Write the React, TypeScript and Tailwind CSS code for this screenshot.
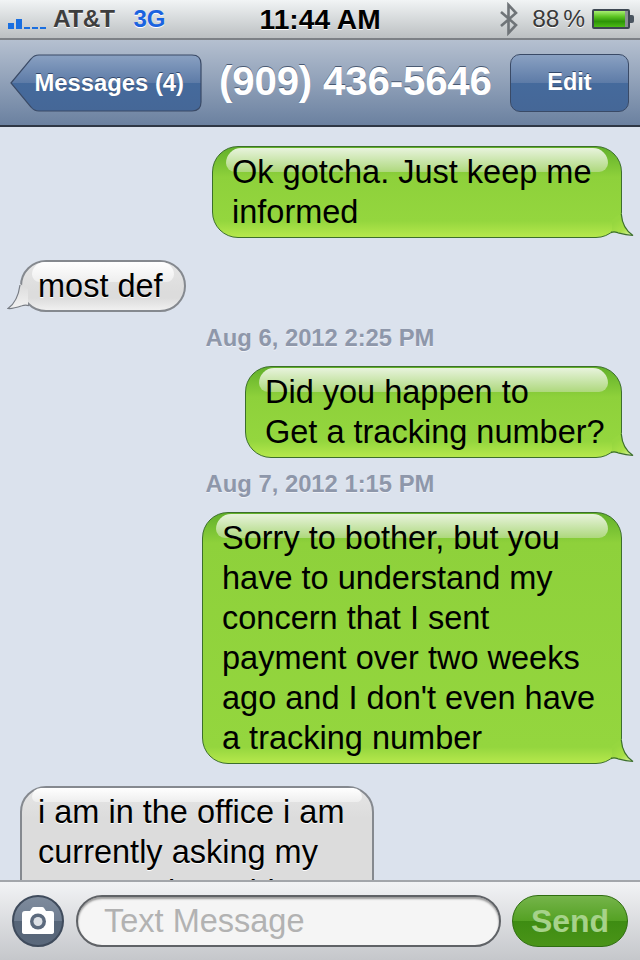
import type { ReactNode } from "react";

const SentTail = ({ id }: { id: string }) => (
  <svg className="absolute right-[-13px] bottom-[-1px]" width="26" height="30" viewBox="0 0 26 30">
    <defs>
      <linearGradient id={id} gradientUnits="userSpaceOnUse" x1="10" y1="12" x2="20" y2="27">
        <stop offset="0" stopColor="#96d73f" />
        <stop offset="0.6" stopColor="#a8e046" />
        <stop offset="1" stopColor="#cdee8c" />
      </linearGradient>
    </defs>
    <path d="M4 24.5 C10 24 16 26 25 27.5 C18 23 14 15 13.3 5 L4 12 Z" fill={`url(#${id})`} />
    <path d="M3 24.6 C6 23 8 24 10 24.8 C15 26 20 27 25 27.5 C18 23 14 15 13.3 6" fill="none" stroke="#3c6f2c" strokeWidth="1.2" />
  </svg>
);

const ReceivedTail = () => (
  <svg className="absolute left-[-15px] bottom-[-1px]" width="30" height="32" viewBox="0 0 30 32">
    <defs>
      <linearGradient id="grayTail" x1="0" y1="0" x2="0" y2="1">
        <stop offset="0" stopColor="#dcdcdc" />
        <stop offset="1" stopColor="#f2f2f2" />
      </linearGradient>
    </defs>
    <path d="M21 26.5 C14 27.5 7 30 1 29.5 C7.5 25 11.5 17 13 5 L21 10 Z" fill="url(#grayTail)" />
    <path d="M22 26.8 C19 25.5 17 26 15 26.8 C10 28.5 5 30 1 29.5 C7.5 25 11.5 17 13 6" fill="none" stroke="#777c84" strokeWidth="1.2" />
  </svg>
);

const Sent = ({ children, className, id }: { children: ReactNode; className: string; id: string }) => (
  <div className={`relative mr-[18px] self-end rounded-[26px] border border-[#3c6f2c] bg-[linear-gradient(#62b02a,#8ed13b_30px,#94d63e_calc(100%-16px),#b6e84c)] py-[5px] pl-[19px] text-[32.5px] leading-[40px] text-black ${className}`}>
    <div className="absolute top-[1px] right-[13px] left-[13px] h-[24px] rounded-t-[20px] rounded-b-[12px] bg-gradient-to-b from-[#e8f3dc] to-[#aed87c]" />
    <div className="relative whitespace-pre">{children}</div>
    <SentTail id={id} />
  </div>
);

const Received = ({ children, className, cut }: { children: ReactNode; className: string; cut?: boolean }) => (
  <div className={`relative ml-[20px] self-start rounded-[26px] border-2 border-[#85898f] bg-[linear-gradient(#e6e6e6,#dcdcdc_30px,#dcdcdc_calc(100%-12px),#f0f0f0)] py-[4px] pl-[16px] text-[32.5px] leading-[40px] text-black ${className}`}>
    <div className={`absolute top-0 right-[10px] left-[10px] rounded-t-[20px] rounded-b-[12px] bg-gradient-to-b from-[#ffffff] to-[#eeeeee] ${cut ? "h-[14px]" : "h-[20px]"}`} />
    <div className="relative whitespace-pre [text-shadow:0_1px_0_#fff]">{children}</div>
    {!cut && <ReceivedTail />}
  </div>
);

const Stamp = ({ children, className }: { children: ReactNode; className: string }) => (
  <div className={`self-center text-[23.8px] leading-[26px] font-bold text-[#8e97aa] [text-shadow:0_1px_0_#eef1f7] ${className}`}>{children}</div>
);

const Signal = () => (
  <div className="mt-[9px] flex items-end gap-[2px]">
    <div className="h-[6px] w-[6px] bg-[#1a6fe0]" />
    <div className="h-[10px] w-[6px] bg-[#1a6fe0]" />
    <div className="h-[2px] w-[6px] bg-[#1a6fe0]" />
    <div className="h-[2px] w-[6px] bg-[#1a6fe0]" />
    <div className="h-[2px] w-[6px] bg-[#1a6fe0]" />
  </div>
);

const Battery = () => (
  <div className="flex items-center">
    <div className="flex h-[20px] w-[38px] rounded-[2px] border-2 border-[#3d4752] bg-[#8a8f94]">
      <div className="h-full w-[31px] bg-[linear-gradient(#a8ee72,#5cc422_35%,#2c9408_65%,#4cbc16)]" />
    </div>
    <div className="h-[8px] w-[4px] rounded-r-[2px] bg-[#4a5560]" />
  </div>
);

const Bluetooth = () => (
  <svg width="20" height="34" viewBox="0 0 20 34" fill="none" stroke="#6f7478" strokeWidth="2.6">
    <path d="M2 10 L17 23 L9.5 31 V3 L17 11 L2 24" />
  </svg>
);

const Camera = () => (
  <svg width="32" height="28" viewBox="0 0 32 28">
    <path fill="#fff" d="M3 4 H8 L10 1 Q10.5 0 12 0 H20 Q21.5 0 22 1 L24 4 H29 Q32 4 32 7 V25 Q32 27 29 27 H3 Q0 27 0 25 V7 Q0 4 3 4 Z" />
    <circle cx="16" cy="14.5" r="8" fill="#5c6a7d" />
    <circle cx="16" cy="14.5" r="4.5" fill="#dde1e6" />
  </svg>
);

export default function App() {
  return (
    <div className="flex h-[960px] w-[640px] flex-col overflow-hidden bg-[#dbe2ed] font-['Liberation_Sans',Arial,sans-serif]">
      <header className="flex h-[40px] shrink-0 items-center border-b-2 border-[#7d8186] bg-gradient-to-b from-[#f1f4f5] to-[#bcc0c2] pr-[6px] pl-[8px]">
        <Signal />
        <span className="ml-[7px] text-[24.5px] font-bold tracking-[-0.5px] text-[#3e3e3e] [text-shadow:0_1px_0_#fff]">AT&amp;T</span>
        <span className="ml-[19px] text-[24px] font-bold text-[#1a63e0] [text-shadow:0_1px_0_#fff]">3G</span>
        <span className="ml-[94px] text-[28.2px] font-bold text-black [text-shadow:0_1px_0_#fff]">11:44 AM</span>
        <div className="ml-auto flex items-center">
          <Bluetooth />
          <span className="ml-[13px] text-[24.5px] [word-spacing:-3px] text-[#3a3a3a] [text-shadow:0_1px_0_#fff]">88 %</span>
          <div className="ml-[7px]">
            <Battery />
          </div>
        </div>
      </header>

      <nav className="flex h-[87px] shrink-0 items-center border-b-2 border-[#2e3745] bg-gradient-to-b from-[#b5c0d0] to-[#6b81a0] pr-[11px] pl-[10px]">
        <div className="relative flex h-[58px] w-[192px] items-center justify-end">
          <svg className="absolute top-0 left-0" width="192" height="58" viewBox="0 0 192 58">
            <defs>
              <linearGradient id="backFill" x1="0" y1="0" x2="0" y2="1">
                <stop offset="0" stopColor="#8aa1c2" />
                <stop offset="0.5" stopColor="#5d7ba7" />
                <stop offset="0.5" stopColor="#456a9c" />
                <stop offset="1" stopColor="#456797" />
              </linearGradient>
            </defs>
            <path d="M1 29 L21 5 Q24 1 29 1 H182 Q191 1 191 10 V48 Q191 57 182 57 H29 Q24 57 21 53 Z" fill="url(#backFill)" stroke="#3a4a66" strokeWidth="1.2" />
          </svg>
          <span className="relative mr-[18px] text-[23.8px] font-bold text-white [text-shadow:0_-1px_0_#33486a]">Messages (4)</span>
        </div>
        <h1 className="ml-[17px] text-[40.3px] font-bold tracking-[-0.2px] whitespace-nowrap text-white [text-shadow:0_-1px_0_#4a5a73]">(909) 436-5646</h1>
        <div className="ml-auto flex h-[58px] w-[119px] items-center justify-center rounded-[10px] border border-[#3a4a66] bg-[linear-gradient(#8aa1c2,#5d7ba7_50%,#456a9c_50%,#456797)] text-[23.5px] font-bold text-white [text-shadow:0_-1px_0_#33486a]">
          Edit
        </div>
      </nav>

      <main className="flex min-h-0 flex-1 flex-col overflow-hidden pt-[19px]">
        <Sent id="tailA" className="w-[410px]">{"Ok gotcha. Just keep me\ninformed"}</Sent>
        <div className="mt-[22px] flex flex-col">
          <Received className="w-[166px]">most def</Received>
        </div>
        <Stamp className="mt-[13px]">Aug 6, 2012 2:25 PM</Stamp>
        <div className="mt-[15px] flex flex-col">
          <Sent id="tailB" className="w-[377px]">{"Did you happen to\nGet a tracking number?"}</Sent>
        </div>
        <Stamp className="mt-[13px]">Aug 7, 2012 1:15 PM</Stamp>
        <div className="mt-[15px] flex flex-col">
          <Sent id="tailC" className="w-[420px]">{"Sorry to bother, but you\nhave to understand my\nconcern that I sent\npayment over two weeks\nago and I don't even have\na tracking number"}</Sent>
        </div>
        <div className="mt-[22px] flex flex-col">
          <Received cut className="w-[354px]">{"i am in the office i am\ncurrently asking my\npartner about this"}</Received>
        </div>
      </main>

      <footer className="flex h-[80px] shrink-0 items-center border-t-2 border-[#a3a6ab] bg-gradient-to-b from-[#f2f3f5] to-[#c5c7cb] pr-[12px] pl-[12px]">
        <div className="flex h-[52px] w-[52px] items-center justify-center rounded-full border-2 border-[#3f4b5c] bg-[linear-gradient(#7e8b9c,#6f7d90_50%,#566578_50%,#5a687b)]">
          <Camera />
        </div>
        <div className="ml-[12px] flex h-[52px] w-[425px] items-center rounded-[26px] border-2 border-[#5f6266] bg-[#f5f5f5] pl-[26px] text-[32.5px] text-[#b2b2b2] shadow-[inset_0_2px_2px_#9a9a9a]">
          Text Message
        </div>
        <div className="ml-[11px] flex h-[52px] w-[116px] items-center justify-center rounded-[26px] border border-[#2f6e10] bg-[linear-gradient(#75b44a,#54a123_50%,#3e8c12_50%,#4a9418)] text-[32px] font-bold text-[#a6d28a]">
          Send
        </div>
      </footer>
    </div>
  );
}
